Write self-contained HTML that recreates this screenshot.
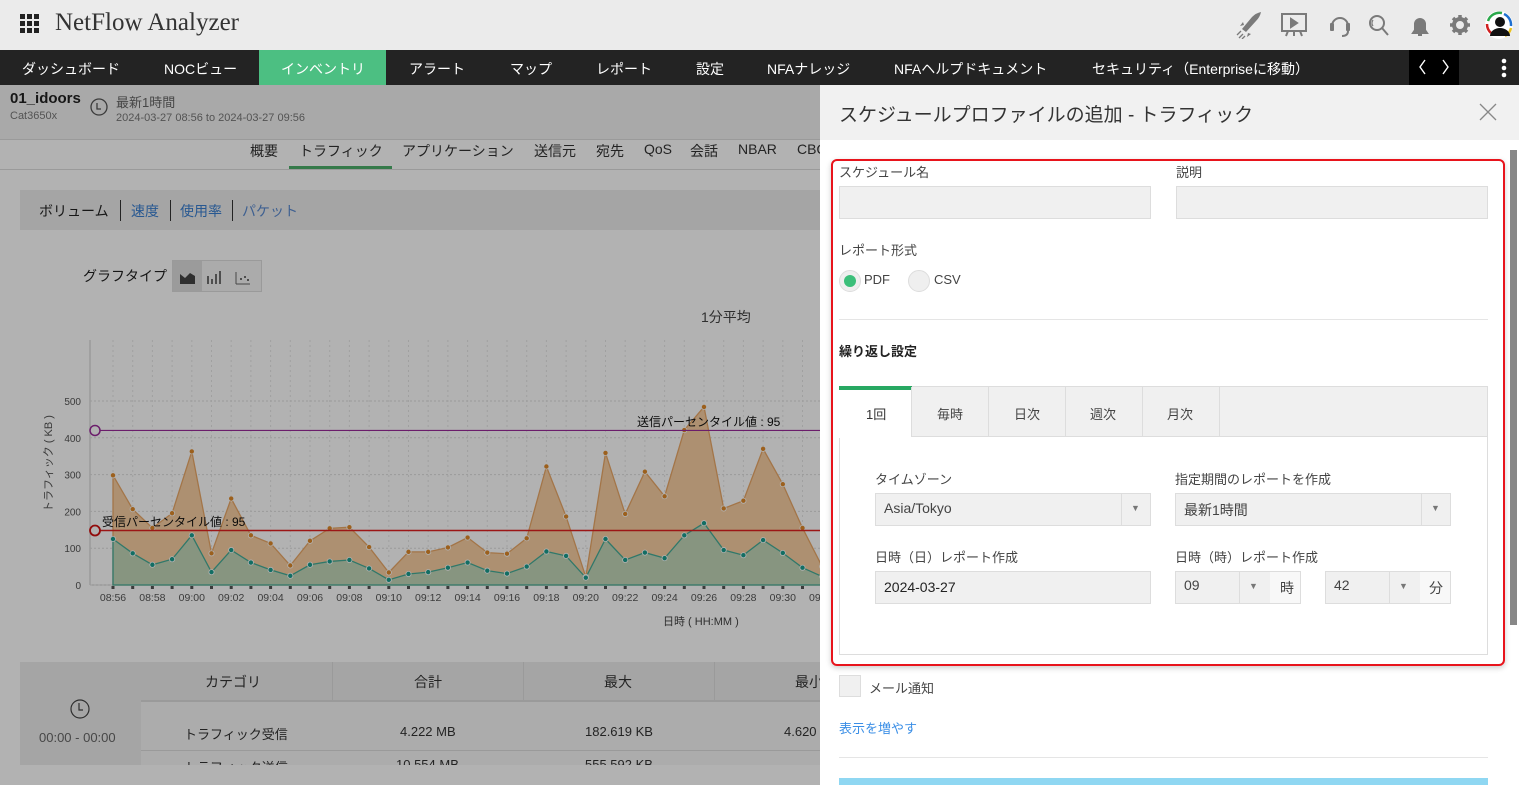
<!DOCTYPE html>
<html><head><meta charset="utf-8">
<style>
*{box-sizing:border-box;margin:0;padding:0}
body{width:1519px;height:785px;overflow:hidden;position:relative;font-family:"Liberation Sans","Noto Sans CJK JP",sans-serif;background:#fff;color:#333}
.abs{position:absolute}
.top{left:0;top:0;width:1519px;height:50px;background:#ebebeb}
.nav{left:0;top:50px;width:1519px;height:35px;background:#232323;color:#fff;font-size:14px}
.nav span{position:absolute;top:9px;white-space:nowrap}
.t{position:absolute;white-space:nowrap}
.ov{left:0;top:85px;width:820px;height:700px;background:rgba(0,0,0,0.3)}
.modal{left:820px;top:85px;width:699px;height:700px;background:#fff}
.inp{position:absolute;background:#f0f0f0;border:1px solid #ddd}
.lbl{position:absolute;font-size:13px;color:#444;white-space:nowrap}
</style></head><body>
<div class="abs top">
  <svg class="abs" style="left:20px;top:14px" width="20" height="20"><g fill="#222"><rect x="0" y="0" width="5" height="5"/><rect x="7" y="0" width="5" height="5"/><rect x="14" y="0" width="5" height="5"/><rect x="0" y="7" width="5" height="5"/><rect x="7" y="7" width="5" height="5"/><rect x="14" y="7" width="5" height="5"/><rect x="0" y="14" width="5" height="5"/><rect x="7" y="14" width="5" height="5"/><rect x="14" y="14" width="5" height="5"/></g></svg>
  <div class="t" style="left:55px;top:9px;font-family:'Liberation Serif',serif;font-size:25px;color:#333">NetFlow Analyzer</div>
  <svg class="abs" style="left:1236px;top:11px" width="240" height="28" fill="none" stroke="#7a7a7a" stroke-width="2">
    <path d="M6 18 L16 6 Q20 2 25 1 Q24 6 20 10 L10 21 Z" fill="#7a7a7a" stroke="none"/><path d="M8 14 l-4 1 3-4 z M12 22 l-1 4 4-3z" fill="#7a7a7a" stroke="none"/><path d="M3 27 l4-4 M6 28 l3-3 M1 24 l4-4" stroke-width="1.3"/>
    <rect x="46" y="3" width="24" height="17"/><path d="M55 8 l6 4 -6 4z" fill="#7a7a7a"/><path d="M52 20 l-2 5 M64 20 l2 5 M58 20 v5"/>
    <path d="M96 15 a8 8 0 0 1 16 0"/><rect x="94" y="12" width="4" height="8" rx="1" fill="#7a7a7a" stroke="none"/><rect x="110" y="12" width="4" height="8" rx="1" fill="#7a7a7a" stroke="none"/><path d="M112 20 q0 5 -6 5"/>
    <circle cx="141" cy="12" r="7"/><path d="M146 17 l6 7"/><path d="M137 9 a5 5 0 0 0 0 6" stroke-width="1.3"/>
    <path d="M177 22 h14 l-2-3 v-6 a5 5 0 0 0 -10 0 v6z M182 24 h4" fill="#7a7a7a"/>
    <g transform="translate(224 14)"><circle r="6" stroke-width="4"/><path d="M0 -10 v4 M0 6 v4 M-10 0 h4 M6 0 h4 M-7 -7 l3 3 M4 4 l3 3 M7 -7 l-3 3 M-4 4 l-3 3" stroke-width="3.5"/><circle r="2.5" fill="#ebebeb" stroke="none"/></g>
  </svg>
  <svg class="abs" style="left:1484px;top:10px" width="30" height="30"><circle cx="15" cy="15" r="14" fill="#fff"/><path d="M4 11 a12 12 0 0 1 14-8" stroke="#2aa84a" stroke-width="2.5" fill="none"/><path d="M20 4 a12 12 0 0 1 7 12" stroke="#1e6fd0" stroke-width="2.5" fill="none"/><path d="M27 18 a12 12 0 0 1 -6 8" stroke="#e8c020" stroke-width="2.5" fill="none"/><path d="M3 14 a12 12 0 0 0 4 9" stroke="#d02020" stroke-width="2.5" fill="none"/><circle cx="16" cy="12" r="5" fill="#111"/><path d="M6 26 a10 8 0 0 1 20 0z" fill="#111"/></svg>
</div>
<div class="abs nav">
  <span style="left:22px">ダッシュボード</span>
  <span style="left:164px">NOCビュー</span>
  <div class="abs" style="left:259px;top:0;width:127px;height:35px;background:#4cbf82"></div>
  <span style="left:281px">インベントリ</span>
  <span style="left:409px">アラート</span>
  <span style="left:510px">マップ</span>
  <span style="left:596px">レポート</span>
  <span style="left:696px">設定</span>
  <span style="left:767px">NFAナレッジ</span>
  <span style="left:894px">NFAヘルプドキュメント</span>
  <span style="left:1092px">セキュリティ（Enterpriseに移動）</span>
  <div class="abs" style="left:1409px;top:0;width:50px;height:35px;background:#000"></div>
  <svg class="abs" style="left:1409px;top:0" width="50" height="35"><path d="M16 10 l-5 7 5 7 M34 10 l5 7 -5 7" stroke="#fff" stroke-width="1.4" fill="none"/></svg>
  <svg class="abs" style="left:1500px;top:8px" width="8" height="20"><circle cx="4" cy="3" r="2.3" fill="#fff"/><circle cx="4" cy="10" r="2.3" fill="#fff"/><circle cx="4" cy="17" r="2.3" fill="#fff"/></svg>
</div>

<!-- left page -->
<div class="abs" style="left:0;top:85px;width:820px;height:55px;background:#f3f3f3;border-bottom:1px solid #ddd"></div>
<div class="t" style="left:10px;top:90px;font-size:15px;font-weight:bold;color:#222">01_idoors</div>
<div class="t" style="left:10px;top:110px;font-size:11px;color:#777">Cat3650x</div>
<svg class="abs" style="left:89px;top:97px" width="20" height="20"><circle cx="10" cy="10" r="8" fill="none" stroke="#555" stroke-width="1.3"/><path d="M8 6 v6 h4" stroke="#555" fill="none" stroke-width="1.3"/></svg>
<div class="t" style="left:116px;top:92px;font-size:13px;color:#666">最新1時間</div>
<div class="t" style="left:116px;top:112px;font-size:11px;color:#777">2024-03-27 08:56 to 2024-03-27 09:56</div>
<div class="abs" style="left:0;top:169px;width:820px;height:1px;background:#ddd"></div>
<div class="t" style="left:250px;top:141px;font-size:14px;color:#333">概要</div>
<div class="t" style="left:299px;top:141px;font-size:14px;color:#333">トラフィック</div>
<div class="abs" style="left:289px;top:166px;width:103px;height:3px;background:#4caf6a"></div>
<div class="t" style="left:402px;top:141px;font-size:14px">アプリケーション</div>
<div class="t" style="left:534px;top:141px;font-size:14px">送信元</div>
<div class="t" style="left:596px;top:141px;font-size:14px">宛先</div>
<div class="t" style="left:644px;top:141px;font-size:14px">QoS</div>
<div class="t" style="left:690px;top:141px;font-size:14px">会話</div>
<div class="t" style="left:738px;top:141px;font-size:14px">NBAR</div>
<div class="t" style="left:797px;top:141px;font-size:14px">CBQ</div>
<div class="abs" style="left:20px;top:190px;width:800px;height:40px;background:#ececec"></div>
<div class="t" style="left:39px;top:201px;font-size:14px;color:#222">ボリューム</div>
<div class="abs" style="left:120px;top:200px;width:1px;height:21px;background:#333"></div>
<div class="t" style="left:131px;top:201px;font-size:14px;color:#3a7fd0">速度</div>
<div class="abs" style="left:170px;top:200px;width:1px;height:21px;background:#333"></div>
<div class="t" style="left:180px;top:201px;font-size:14px;color:#3a7fd0">使用率</div>
<div class="abs" style="left:232px;top:200px;width:1px;height:21px;background:#333"></div>
<div class="t" style="left:242px;top:201px;font-size:14px;color:#5a8ad0">パケット</div>
<div class="t" style="left:83px;top:266px;font-size:14px;color:#222">グラフタイプ</div>
<div class="abs" style="left:172px;top:260px;width:90px;height:32px;border:1px solid #ddd;background:#f5f5f5"></div>
<div class="abs" style="left:173px;top:261px;width:29px;height:30px;background:#dedede"></div>
<svg class="abs" style="left:172px;top:260px" width="90" height="32"><path d="M8 24 V14 l5 4 5-5 5 3 V24z" fill="#444"/><path d="M36 24 v-8 M40 24 v-5 M44 24 v-10 M48 24 v-13" stroke="#444" stroke-width="1.5"/><path d="M64 24 h14 M64 12 v12" stroke="#666"/><circle cx="69" cy="19" r="1" fill="#444"/><circle cx="73" cy="17" r="1" fill="#444"/><circle cx="76" cy="20" r="1" fill="#444"/></svg>
<div class="t" style="left:701px;top:307px;font-size:14px;color:#444">1分平均</div>
<svg id="ch" class="abs" style="left:0;top:330px" width="820" height="310"></svg>
<div class="t" style="font-size:11px;color:#555;transform:rotate(-90deg);transform-origin:0 0;top:512px;left:40px">トラフィック ( KB )</div>
<div class="t" style="left:663px;top:613px;font-size:11px;color:#444">日時 ( HH:MM )</div>
<div class="t" style="left:637px;top:413px;font-size:12px;color:#111">送信パーセンタイル値 : 95</div>
<div class="t" style="left:102px;top:513px;font-size:12px;color:#111">受信パーセンタイル値 : 95</div>

<div class="abs" style="left:20px;top:662px;width:800px;height:103px;background:#f7f7f7;overflow:hidden">
<div class="abs" style="left:0;top:0;width:121px;height:103px;background:#ececec"></div>
<div class="abs" style="left:121px;top:0;width:679px;height:40px;background:#ececec;border-bottom:2px solid #ddd"></div>
<div class="abs" style="left:312px;top:0;width:1px;height:40px;background:#ddd"></div>
<div class="abs" style="left:503px;top:0;width:1px;height:40px;background:#ddd"></div>
<div class="abs" style="left:694px;top:0;width:1px;height:40px;background:#ddd"></div>
<div class="abs" style="left:121px;top:88px;width:679px;height:1px;background:#ddd"></div>
<svg class="abs" style="left:49px;top:36px" width="22" height="22"><circle cx="11" cy="11" r="9" fill="none" stroke="#444" stroke-width="1.2"/><path d="M10 5 v7 h4" stroke="#444" fill="none" stroke-width="1.2"/></svg>
<div class="t" style="left:19px;top:68px;font-size:13px;color:#666">00:00 - 00:00</div>
<div class="t" style="left:185px;top:10px;font-size:14px">カテゴリ</div>
<div class="t" style="left:394px;top:10px;font-size:14px">合計</div>
<div class="t" style="left:584px;top:10px;font-size:14px">最大</div>
<div class="t" style="left:775px;top:10px;font-size:14px">最小</div>
<div class="t" style="left:164px;top:62px;font-size:13px">トラフィック受信</div>
<div class="t" style="left:380px;top:62px;font-size:13px">4.222 MB</div>
<div class="t" style="left:565px;top:62px;font-size:13px">182.619 KB</div>
<div class="t" style="left:764px;top:62px;font-size:13px">4.620</div>
<div class="t" style="left:164px;top:95px;font-size:13px">トラフィック送信</div>
<div class="t" style="left:376px;top:95px;font-size:13px">10.554 MB</div>
<div class="t" style="left:565px;top:95px;font-size:13px">555.592 KB</div>
</div>
<div class="abs ov"></div>

<!-- modal -->
<div class="abs modal">
  <div class="abs" style="left:0;top:0;width:699px;height:55px;background:#f1f1f1"></div>
  <div class="t" style="left:19px;top:15px;font-size:19px;color:#333">スケジュールプロファイルの追加 - トラフィック</div>
  <svg class="abs" style="left:659px;top:18px" width="18" height="18"><path d="M1 1 L17 17 M17 1 L1 17" stroke="#888" stroke-width="1.3"/></svg>
  <div class="abs" style="left:690px;top:65px;width:7px;height:475px;background:#888"></div>
</div>
<div class="abs" style="left:831px;top:159px;width:674px;height:507px;border:2px solid #e8141c;border-radius:6px;box-shadow:0 2px 6px rgba(0,0,0,0.2)"></div>
<div class="lbl" style="left:839px;top:162px">スケジュール名</div>
<div class="lbl" style="left:1176px;top:162px">説明</div>
<div class="inp" style="left:839px;top:186px;width:312px;height:33px"></div>
<div class="inp" style="left:1176px;top:186px;width:312px;height:33px"></div>
<div class="lbl" style="left:839px;top:240px">レポート形式</div>
<div class="abs" style="left:839px;top:270px;width:22px;height:22px;border-radius:50%;background:#efefef;border:1px solid #ddd"></div>
<div class="abs" style="left:844px;top:275px;width:12px;height:12px;border-radius:50%;background:#3cbf7a"></div>
<div class="lbl" style="left:864px;top:272px">PDF</div>
<div class="abs" style="left:908px;top:270px;width:22px;height:22px;border-radius:50%;background:#efefef;border:1px solid #ddd"></div>
<div class="lbl" style="left:934px;top:272px">CSV</div>
<div class="abs" style="left:839px;top:319px;width:649px;height:1px;background:#e5e5e5"></div>
<div class="lbl" style="left:839px;top:341px;font-weight:bold;color:#222">繰り返し設定</div>
<div class="abs" style="left:839px;top:386px;width:649px;height:269px;border:1px solid #ddd;background:#fff"></div>
<div class="abs" style="left:839px;top:386px;width:649px;height:51px;background:#f0f0f0;border:1px solid #ddd"></div>
<div class="abs" style="left:839px;top:386px;width:73px;height:52px;background:#fff"></div>
<div class="abs" style="left:839px;top:386px;width:73px;height:4px;background:#27a862"></div>
<div class="abs" style="left:988px;top:387px;width:1px;height:50px;background:#ddd"></div>
<div class="abs" style="left:1065px;top:387px;width:1px;height:50px;background:#ddd"></div>
<div class="abs" style="left:1142px;top:387px;width:1px;height:50px;background:#ddd"></div>
<div class="abs" style="left:1219px;top:387px;width:1px;height:50px;background:#ddd"></div>
<div class="abs" style="left:911px;top:387px;width:1px;height:50px;background:#ddd"></div>
<div class="lbl" style="left:866px;top:404px;color:#333">1回</div>
<div class="lbl" style="left:937px;top:404px">毎時</div>
<div class="lbl" style="left:1014px;top:404px">日次</div>
<div class="lbl" style="left:1090px;top:404px">週次</div>
<div class="lbl" style="left:1167px;top:404px">月次</div>
<div class="lbl" style="left:875px;top:469px">タイムゾーン</div>
<div class="lbl" style="left:1175px;top:469px">指定期間のレポートを作成</div>
<div class="inp" style="left:875px;top:493px;width:276px;height:33px"></div>
<div class="abs" style="left:1121px;top:494px;width:1px;height:31px;background:#ddd"></div>
<div class="lbl" style="left:884px;top:500px;font-size:14px">Asia/Tokyo</div>
<div class="t" style="left:1131px;top:503px;font-size:9px;color:#777">▼</div>
<div class="inp" style="left:1175px;top:493px;width:276px;height:33px"></div>
<div class="abs" style="left:1421px;top:494px;width:1px;height:31px;background:#ddd"></div>
<div class="lbl" style="left:1184px;top:500px;font-size:14px">最新1時間</div>
<div class="t" style="left:1431px;top:503px;font-size:9px;color:#777">▼</div>
<div class="lbl" style="left:875px;top:547px">日時（日）レポート作成</div>
<div class="lbl" style="left:1175px;top:547px">日時（時）レポート作成</div>
<div class="inp" style="left:875px;top:571px;width:276px;height:33px"></div>
<div class="lbl" style="left:884px;top:579px;font-size:14px;color:#222">2024-03-27</div>
<div class="inp" style="left:1175px;top:571px;width:126px;height:33px"></div>
<div class="abs" style="left:1239px;top:572px;width:1px;height:31px;background:#ddd"></div>
<div class="abs" style="left:1270px;top:572px;width:30px;height:31px;background:#f8f8f8"></div>
<div class="lbl" style="left:1184px;top:577px;font-size:14px">09</div>
<div class="t" style="left:1249px;top:581px;font-size:9px;color:#777">▼</div>
<div class="lbl" style="left:1280px;top:578px;font-size:14px">時</div>
<div class="inp" style="left:1325px;top:571px;width:126px;height:33px"></div>
<div class="abs" style="left:1389px;top:572px;width:1px;height:31px;background:#ddd"></div>
<div class="abs" style="left:1420px;top:572px;width:30px;height:31px;background:#f8f8f8"></div>
<div class="lbl" style="left:1334px;top:577px;font-size:14px">42</div>
<div class="t" style="left:1399px;top:581px;font-size:9px;color:#777">▼</div>
<div class="lbl" style="left:1429px;top:578px;font-size:14px">分</div>
<div class="inp" style="left:839px;top:675px;width:22px;height:22px"></div>
<div class="lbl" style="left:869px;top:678px">メール通知</div>
<div class="lbl" style="left:839px;top:718px;color:#3a8ee6">表示を増やす</div>
<div class="abs" style="left:839px;top:757px;width:649px;height:1px;background:#e5e5e5"></div>
<div class="abs" style="left:839px;top:778px;width:649px;height:7px;background:#8fd7f2"></div>

<script>
(function(){
var s=[298,206,155,195,363,86,235,135,113,53,120,154,157,103,34,90,90,102,129,88,85,127,322,186,22,359,193,308,241,421,484,208,229,370,274,155,50];
var r=[125,86,55,70,135,35,95,61,41,25,55,64,68,45,14,30,35,47,61,39,31,50,91,79,20,125,68,88,73,135,168,95,81,122,87,47,23];
var X=function(i){return 113+19.7*i}, Y=function(v){return 255-0.368*v};
var h='<defs><clipPath id="c"><rect x="0" y="0" width="820" height="310"/></clipPath></defs><g clip-path="url(#c)">';
h+='<line x1="90" y1="10" x2="90" y2="255" stroke="#ccc"/><line x1="90" y1="255" x2="820" y2="255" stroke="#ccc"/>';
for(var k=0;k<=5;k++){var y=Y(k*100);h+='<line x1="90" y1="'+y+'" x2="820" y2="'+y+'" stroke="#ddd" stroke-dasharray="2 2"/><text x="81" y="'+(y+4)+'" font-size="10" fill="#555" text-anchor="end" font-family="Liberation Sans">'+(k*100)+'</text>';}
for(var i=0;i<s.length;i++){var x=X(i);h+='<line x1="'+x+'" y1="10" x2="'+x+'" y2="255" stroke="#e6e6e6" stroke-dasharray="2 3"/><rect x="'+(x-1.5)+'" y="256" width="3" height="3" fill="#555"/>';
 if(i%2==0){var m=56+i,hh=8+Math.floor(m/60),mm=m%60;h+='<text x="'+x+'" y="271" font-size="10.5" fill="#555" text-anchor="middle" font-family="Liberation Sans">'+('0'+hh).slice(-2)+':'+('0'+mm).slice(-2)+'</text>';}}
var ps='',pr='';for(i=0;i<s.length;i++){ps+=X(i)+','+Y(s[i])+' ';pr+=X(i)+','+Y(r[i])+' ';}
var e=X(s.length-1);
h+='<polygon points="'+X(0)+',255 '+ps+e+',255" fill="#f8cfa2" stroke="#eaa868" stroke-width="1.3"/>';
h+='<polygon points="'+X(0)+',255 '+pr+e+',255" fill="#c2d6b8" stroke="#45ad98" stroke-width="1.3"/>';
for(i=0;i<s.length;i++){h+='<circle cx="'+X(i)+'" cy="'+Y(s[i])+'" r="2.6" fill="#e08a2a" stroke="#fff" stroke-width="0.8"/><circle cx="'+X(i)+'" cy="'+Y(r[i])+'" r="2.6" fill="#1a9e8e" stroke="#fff" stroke-width="0.8"/>';}
h+='<line x1="95" y1="'+Y(420)+'" x2="820" y2="'+Y(420)+'" stroke="#9a2a9a" stroke-width="1.2"/><circle cx="95" cy="'+Y(420)+'" r="5" fill="#fff" stroke="#9a2a9a" stroke-width="1.5"/>';
h+='<line x1="95" y1="'+Y(148)+'" x2="820" y2="'+Y(148)+'" stroke="#e02020" stroke-width="1.5"/><circle cx="95" cy="'+Y(148)+'" r="5" fill="#fff" stroke="#d01010" stroke-width="1.8"/>';
h+='</g>';
document.getElementById('ch').innerHTML=h;
})();
</script>
</body></html>
